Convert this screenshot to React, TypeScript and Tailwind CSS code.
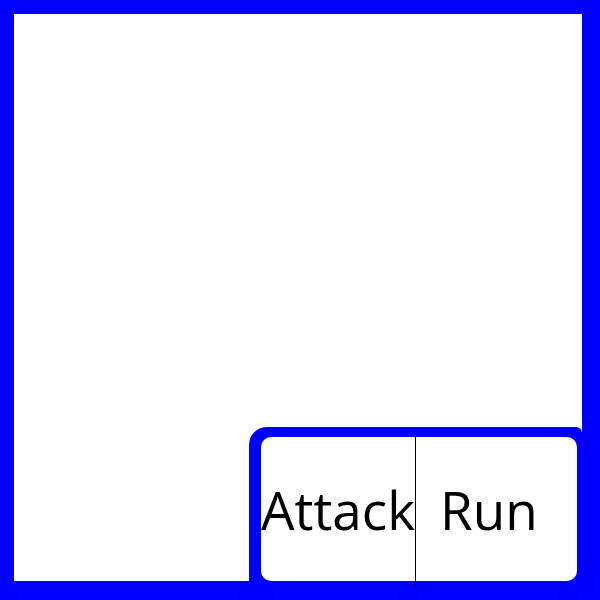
import React from "react";

export default function App() {
  return (
    <div className="w-[600px] h-[600px] bg-[#0000ff] pt-[14px] pl-[14px] pr-[18px] pb-[19px]">
      <div className="w-full h-full bg-white flex flex-col justify-end items-end">
        <div className="relative w-[333px] h-[154px] bg-[#0000ff] rounded-tl-[18px] rounded-tr-[6px] pt-[10px] pl-[12px] pr-[5px]">
          <div
            className="w-full h-full bg-white rounded-[10px] flex items-center text-black text-[53px] leading-none"
            style={{ fontFamily: '"Open Sans", "Noto Sans", sans-serif' }}
          >
            <div className="w-[154px] whitespace-nowrap">Attack</div>
            <div className="flex-1 pl-[25px] whitespace-nowrap">Run</div>
          </div>
          <div className="absolute left-[166px] top-[9px] bottom-[-6px] w-px bg-black" />
        </div>
      </div>
    </div>
  );
}
